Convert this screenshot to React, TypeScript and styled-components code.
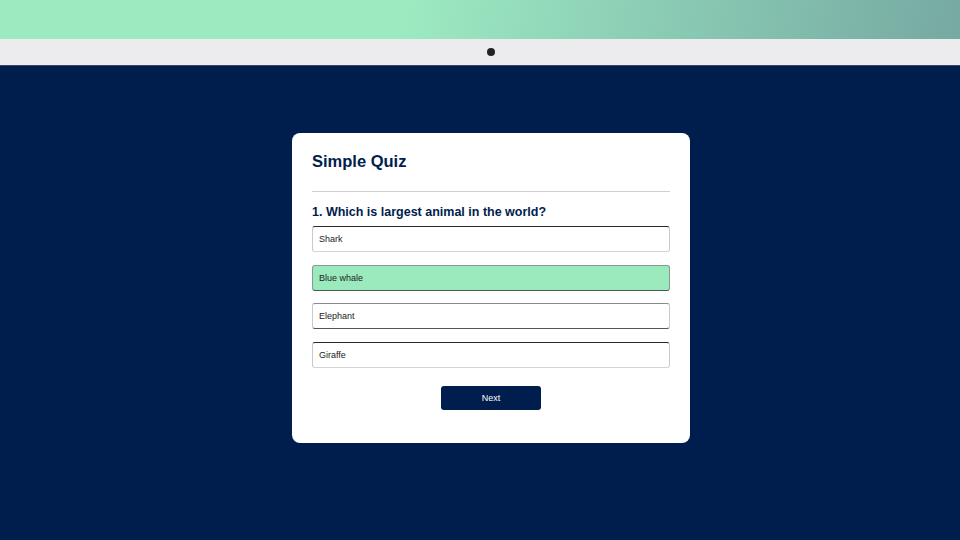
import React from "react";
import styled, { createGlobalStyle } from "styled-components";

const GlobalStyle = createGlobalStyle`
  html, body {
    margin: 0;
    padding: 0;
    background: #001e4d;
    font-family: "Liberation Sans", Arial, sans-serif;
  }
`;

const Page = styled.div`
  width: 960px;
  height: 540px;
  display: flex;
  flex-direction: column;
  overflow: hidden;
`;

const Banner = styled.div`
  height: 39px;
  background: linear-gradient(100deg, #9deac1 0%, #9deac1 42%, #8fd3b8 62%, #76a9a2 100%);
`;

const CameraBar = styled.div`
  height: 26px;
  background: #ececee;
  border-bottom: 1px solid #3a4660;
  display: flex;
  align-items: center;
  justify-content: center;
  padding-left: 22px;
`;

const Camera = styled.span`
  width: 8px;
  height: 8px;
  border-radius: 50%;
  background: #222;
`;

const Stage = styled.main`
  flex: 1;
  background: #001e4d;
  display: flex;
  justify-content: center;
  align-items: flex-start;
  padding: 67px 0 0 22px;
`;

const Card = styled.section`
  width: 358px;
  background: #fff;
  border-radius: 8px;
  padding: 17px 20px 33px;
`;

const Title = styled.h1`
  margin: 0;
  font-size: 16.5px;
  line-height: 22px;
  font-weight: 700;
  color: #001e4d;
`;

const Rule = styled.hr`
  margin: 19px 0 0;
  border: none;
  border-top: 1px solid #cfcfcf;
`;

const Question = styled.h2`
  margin: 12px 0 6px;
  font-size: 12.5px;
  line-height: 16px;
  font-weight: 700;
  color: #001e4d;
`;

const Options = styled.div`
  display: flex;
  flex-direction: column;
  gap: 12.5px;
`;

const Option = styled.button<{ $correct?: boolean; $edge: string }>`
  height: 26px;
  text-align: left;
  padding: 0 6px;
  font-family: "Liberation Sans", Arial, sans-serif;
  font-size: 9px;
  color: #222;
  border-radius: 3px;
  border: 1px solid #c9c9c9;
  border-top-color: ${(p) => (p.$edge === "top" ? "#2a2a2a" : "#8a8a8a")};
  border-bottom-color: ${(p) => (p.$edge === "bottom" ? "#555" : "#d4d4d4")};
  background: ${(p) => (p.$correct ? "#9aeabe" : "#fff")};
  ${(p) => p.$correct && "border-color: #8a9a90; border-bottom-color: #4a5a50;"}
`;

const Footer = styled.div`
  display: flex;
  justify-content: center;
  margin-top: 18.5px;
`;

const NextButton = styled.button`
  width: 100px;
  height: 24px;
  border: none;
  border-radius: 3px;
  background: #001e4d;
  color: #fff;
  font-family: "Liberation Sans", Arial, sans-serif;
  font-size: 9px;
`;

const answers = [
  { text: "Shark", edge: "top" },
  { text: "Blue whale", edge: "none", correct: true },
  { text: "Elephant", edge: "bottom" },
  { text: "Giraffe", edge: "top" },
];

export default function App() {
  return (
    <Page>
      <GlobalStyle />
      <Banner />
      <CameraBar>
        <Camera />
      </CameraBar>
      <Stage>
        <Card>
          <Title>Simple Quiz</Title>
          <Rule />
          <Question>1. Which is largest animal in the world?</Question>
          <Options>
            {answers.map((a) => (
              <Option key={a.text} $edge={a.edge} $correct={a.correct}>
                {a.text}
              </Option>
            ))}
          </Options>
          <Footer>
            <NextButton>Next</NextButton>
          </Footer>
        </Card>
      </Stage>
    </Page>
  );
}
